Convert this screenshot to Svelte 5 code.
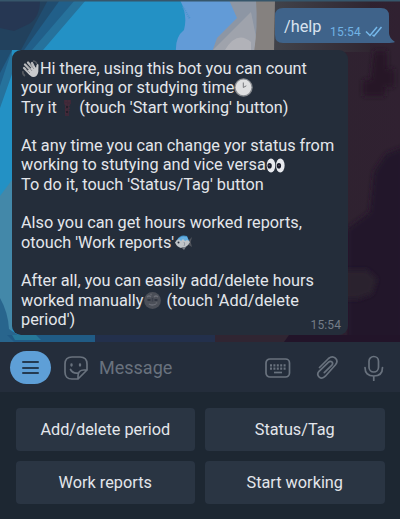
<script>
  const lines = [
    [{ icon: 'wave' }, 'Hi there, using this bot you can count'],
    ['your working or studying time', { icon: 'clock' }],
    ['Try it ', { icon: 'flag' }, " (touch 'Start working' button)"],
    [],
    ['At any time you can change yor status from'],
    ['working to stutying and vice versa', { icon: 'eyes' }],
    ["To do it, touch 'Status/Tag' button"],
    [],
    ['Also you can get hours worked reports,'],
    ["otouch 'Work reports'", { icon: 'fish' }],
    [],
    ['After all, you can easily add/delete hours'],
    ['worked manually', { icon: 'moon' }, " (touch 'Add/delete"],
    ["period')"]
  ];
  const keys = ['Add/delete period', 'Status/Tag', 'Work reports', 'Start working'];
</script>

{#snippet emoji(name)}
  <svg class={['emoji', name]} viewBox="0 0 19 19">
    {#if name === 'wave'}
      <path d="M2 12Q1 15 4 17M12 2q3 0 4 3" fill="none" stroke="#55595f" stroke-width="1.6" />
      <g stroke="#b9babc" stroke-width="2.3" stroke-linecap="round">
        <path d="M3 9l6 6M4 5.5l7 7M7 3.5l6 7M11 4l3 6" />
      </g>
      <path d="M6 12l7-5 2 2 .5-3q1.5-2 2 0l-.2 7q-1 5-5 5-3 0-6.300-6z" fill="#c9cacc" />
      <path d="M6 6l5 6M9 5l4 5M5 10l4 4" stroke="#73767b" stroke-width=".6" />
    {:else if name === 'clock'}
      <circle cx="9.500" cy="9.500" r="9.200" fill="#85898e" />
      <circle cx="9.500" cy="9.300" r="7.900" fill="#dedfe1" />
      <path d="M9.300 4.500v5l3-1.700" fill="none" stroke="#77797d" stroke-width="1" />
    {:else if name === 'flag'}
      <path d="M5 2h7v4l-2 1v11H6V7L5 6z" fill="#3e2838" />
      <path d="M6 3h5M7 5v12M10 6v7" stroke="#4b2d3b" stroke-width="1" stroke-dasharray="2 1" />
      <path d="M8 8v2M8 13v2" stroke="#1d1b25" stroke-width="1.500" />
    {:else if name === 'eyes'}
      <ellipse cx="5" cy="9.500" rx="4.300" ry="7" fill="#e7e9ee" />
      <ellipse cx="14.300" cy="9.500" rx="4.300" ry="7" fill="#e7e9ee" />
      <ellipse cx="3.600" cy="9.800" rx="2.200" ry="2.800" fill="#171b29" />
      <ellipse cx="12.900" cy="9.800" rx="2.200" ry="2.800" fill="#171b29" />
      <circle cx="3.300" cy="9.500" r=".8" fill="#59475b" /><circle cx="12.900" cy="9.500" r=".8" fill="#59475b" />
    {:else if name === 'fish'}
      <path d="M13 9l5-5-1.300 5 1.300 5-5-3z" fill="#50545c" />
      <path d="M3 7q3-6 10-4l2 5z" fill="#438fc4" />
      <path d="M1 9.500Q5 4 12 5l4 4q-3 6-9 6-4-1-6-5.500z" fill="#bfc4c8" />
      <path d="M3 7q4-5 10-3l2 4-2-1-2 1-2-2-2 2-2-2z" fill="#65aee0" />
      <path d="M7 14l3 3 2-3z" fill="#777d86" />
      <path d="M10 9q1.500 2 0 4" fill="none" stroke="#9297a0" />
      <circle cx="4.500" cy="9.500" r="1" fill="#232937" />
    {:else}
      <circle cx="9.500" cy="9.500" r="8.400" fill="#4b4f58" />
      <path d="M4 6q2-2 4 0M11 6q2-2 4 0M6 13q3 2 7 0" fill="none" stroke="#6b6e77" stroke-width="1.300" />
      <path d="M4.500 9h3M11.500 9h3" stroke="#292e3a" stroke-width="1.500" />
      <path d="M9.500 7v3.500" stroke="#3a3f4a" stroke-width="1.500" />
      <circle cx="8" cy="3.500" r="1" fill="#60636b" /><circle cx="13.500" cy="12" r="1" fill="#60636b" />
    {/if}
  </svg>
{/snippet}

<main>
  <section class="chat">
    <svg class="wallpaper" viewBox="0 0 400 342" preserveAspectRatio="none">
      <defs>
        <linearGradient id="night" x1="0" x2="1"><stop offset="0" stop-color="#2d3540" /><stop offset=".55" stop-color="#2f2230" /><stop offset="1" stop-color="#302131" /></linearGradient>
        <linearGradient id="dusk" x1="0" x2="1"><stop offset="0" stop-color="#41434a" /><stop offset="1" stop-color="#302631" /></linearGradient>
        <filter id="soft" x="-20%" y="-20%" width="140%" height="140%"><feGaussianBlur stdDeviation="2.5" /></filter>
      </defs>
      <path d="M0 0h400v342H0z" fill="#2391c5" />
      <path d="M0 0h86L43 50H12v24L0 108z" fill="#26729c" />
      <path d="M0 0h75L32 50H12L0 86z" fill="#215f89" />
      <path d="M0 0h60L24 50H12L0 73z" fill="#204d70" />
      <path d="M0 0h48L21 50H0z" fill="#22415d" />
      <path d="M0 0h40q0 17-11 24L14 31 0 28z" fill="#263753" />
      <path d="M180 0h91v52h-95q-1-15 8-22 4-15-4-30z" fill="#629bd7" />
      <path d="M183 7l7 12" stroke="#4794cd" stroke-width="2" stroke-dasharray="1 1" />
      <path d="M229 0h34v52h-51l5-14 20-20z" fill="#8d96a4" />
      <path d="M213 50l38-38 8 40z" fill="#9fa3ac" />
      <path d="M225 50q12-20 26-8v10z" fill="#b1b2b8" />
      <path d="M256 0h28v52h-30q4-25 2-52z" fill="#85817f" />
      <path d="M277 0h123v342H277z" fill="url(#night)" />
      <path d="M275 0h95v52h-96z" fill="url(#dusk)" />
      <path d="M374 51h13v18h7v18h-9v9h-22V80h8z" fill="#271627" filter="url(#soft)" />
      <path d="M404 147l-18 7-12 18-4 40-23 17v113h57z" fill="#221429" filter="url(#soft)" />
      <path d="M345 270h22l10 9-5 15-14 5h-13z" fill="#2c202f" filter="url(#soft)" />
      <path d="M0 196l12-16v162H0z" fill="#4388a9" />
      <path d="M0 298q8 14 9 31l9 6v7H0z" fill="#28658d" />
      <path d="M7 335h90v7H14z" fill="#205b85" />
      <path d="M12 335h24l5 5H15z" fill="#267899" />
      <path d="M95 335h127v7H95z" fill="#23304c" />
      <path d="M215 335h74v7h-74z" fill="#302532" />
      <path d="M289 335h111v7H284z" fill="#221429" />
      <path d="M0 0h400v1.500H0z" fill="#36566b" />
    </svg>

    <div class="outgoing">
      <svg class="outgoing-shape" viewBox="0 0 120 36"><path d="M8 0h98q8 0 8 8v17q0 5 6 9-2 1-9 1H8q-8 0-8-8V8q0-8 8-8z" fill="#3f638a" /></svg>
      <span class="command">/help</span><time>15:54</time>
      <svg class="checks" viewBox="0 0 18 11"><path d="M1 5.500l4 4L12 1M7.500 8.800L9 10l7.500-9" /></svg>
    </div>

    <article class="incoming">
      {#each lines as line}
        <p>{#each line as part}{#if typeof part === 'string'}<span>{part}</span>{:else}{@render emoji(part.icon)}{/if}{/each}</p>
      {/each}
      <time>15:54</time>
    </article>
  </section>

  <section class="composer">
    <button class="menu" aria-label="Menu"><i></i><i></i><i></i></button>
    <svg class="sticker" viewBox="0 0 26 26"><path d="M15 24H9q-7 0-7-7V9q0-7 7-7h8q7 0 7 7v6l-9 9zM15 24v-3q0-6 6-6h3M7.500 14.500q2 4 7 3.500" /><path d="M8.500 9.500v1M17 9.500v1" stroke-width="2.300" /></svg>
    <span class="placeholder">Message</span>
    <svg class="keyboard-icon" viewBox="0 0 26 20"><rect x="1" y="1" width="23.500" height="18" rx="4" /><path d="M5 7.300h16M5 10.700h16" stroke-width="2.200" stroke-dasharray="2 1.400" /><path d="M9 14.500h8" /></svg>
    <svg class="clip" viewBox="0 0 24 26"><path d="M3.500 12.500L12.500 3.500C17.500-.5 23.500 4.500 19.500 9.800L9.300 21.200C5 25.500-.5 20.800 3 16.300L12.300 7.300C15 4.800 18 7.800 15.700 10.300L8.300 17.600" /></svg>
    <svg class="mic" viewBox="0 0 20 26"><rect x="5" y="1.500" width="9.500" height="15.500" rx="4.750" /><path d="M1 12.500q0 8.500 8.750 8.500t8.750-8.500M9.750 21v4.500" /></svg>
  </section>

  <section class="keys">
    {#each keys as key}<button>{key}</button>{/each}
  </section>
</main>

<style>
  :global(body) { margin: 0; background: #1d2732; }
  * { box-sizing: border-box; }
  main { width: 400px; height: 519px; overflow: hidden; display: flex; flex-direction: column; font-family: Roboto, sans-serif; color: #e3e6eb; }
  .chat { position: relative; height: 342px; flex: none; display: flex; flex-direction: column; padding-top: 8px; }
  .wallpaper { position: absolute; inset: 0; width: 400px; height: 342px; }
  .outgoing { position: relative; align-self: flex-end; width: 120px; height: 36px; margin-right: 5.500px; display: flex; padding-left: 9.500px; flex: none; }
  .outgoing-shape { position: absolute; inset: 0; width: 120px; height: 36px; }
  .command { position: relative; font-size: 16.300px; line-height: 37px; width: 46px; color: #d7e2ef; }
  .outgoing time { position: relative; font-size: 12px; line-height: 49px; width: 35px; letter-spacing: .2px; color: #71b3e5; }
  .checks { position: relative; width: 18px; height: 11px; margin-top: 18px; fill: none; stroke: #75b8ea; stroke-width: 1.500; }
  .incoming { position: relative; width: 336px; height: 285px; margin: 6px 0 0 12px; padding: 9px 9px 0; border-radius: 9px; background: #242d3a; }
  p { margin: 0; height: 19.300px; display: flex; align-items: center; white-space: pre; font-size: 16.280px; line-height: 19.300px; }
  .emoji { width: 19px; height: 19px; flex: none; }
  .flag { margin: 0 -2px; }
  .flag + span { margin-left: -.500px; }
  .incoming time { position: absolute; right: 7px; bottom: 2.500px; font-size: 12px; line-height: 15px; letter-spacing: .1px; color: #747c87; }
  .composer { height: 50px; flex: none; display: flex; align-items: center; padding: 1px 16px 0 10px; background: #242d3b; }
  .composer svg { fill: none; stroke: #69727e; stroke-width: 1.700; stroke-linecap: round; stroke-linejoin: round; flex: none; }
  button { border: 0; font: inherit; color: inherit; padding: 0; }
  .menu { width: 41px; height: 33px; border-radius: 17px; background: #5e9fd7; display: flex; flex-direction: column; align-items: center; justify-content: center; gap: 3.500px; }
  .menu i { width: 17px; height: 2px; border-radius: 1px; background: #243a51; }
  .sticker { width: 26px; height: 26px; margin-left: 12px; }
  .placeholder { font-size: 18px; color: #69727e; margin-left: 10px; width: 166px; line-height: 24px; }
  .composer .keyboard-icon { width: 26px; height: 20px; stroke-linecap: butt; }
  .clip { width: 24px; height: 26px; margin-left: 25px; }
  .mic { width: 20px; height: 26px; margin-left: 24px; }
  .keys { flex: 1; display: grid; grid-template-columns: 179.500px 179.500px; grid-template-rows: 43px 43px; gap: 10.500px 10px; padding: 15.500px 15px 0 15.500px; background: #1d2732; }
  .keys button { background: #2a3543; border-radius: 4px; font-size: 16.280px; line-height: 43px; }
</style>
